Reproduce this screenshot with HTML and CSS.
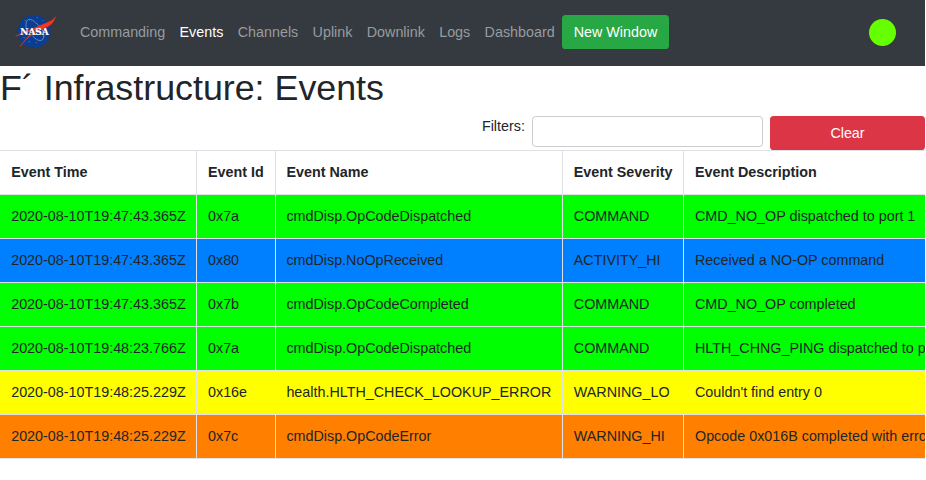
FILE: index.html
```html
<!DOCTYPE html>
<html lang="en">
<head>
<meta charset="utf-8">
<title>F´ Infrastructure: Events</title>
<link rel="stylesheet" href="styles.css">
</head>
<body>
<nav class="navbar">
  <svg class="logo" viewBox="0.4 -0.7 42 36" aria-label="NASA">
    <circle cx="18.5" cy="16.8" r="16.4" fill="#0b3d91"/>
    <g fill="none" stroke="#8ba5d3" stroke-width=".7">
      <path d="M10.5 13C9.5 3 15 3 20 8C27 13 30 20 27 25C24 27 20 25 17 21"/>
      <path d="M9 6h1M21 3h1M27 6h1M8 23h1M13 27h1M20 28h1M28 22h1" stroke-dasharray="1 1"/>
    </g>
    <path d="M0 21.5C12 15.500 22 12 30 8.500C35 6.500 38 5 40 2C38 8 35 11 28 14C19 17 11 23 4.500 32C11 22 17 17 25 13.500C16 16 8 18.500 0 21.500Z" fill="#f5351f" stroke="#f5351f" stroke-width=".4"/>
    <text x="4.6" y="20.2" textLength="28.6" lengthAdjust="spacingAndGlyphs" class="logo-text">NASA</text>
  </svg>
  <div class="links">
    <a>Commanding</a><a class="active">Events</a><a>Channels</a><a>Uplink</a><a>Downlink</a><a>Logs</a><a>Dashboard</a>
  </div>
  <button class="btn new-window">New Window</button>
  <span class="status"></span>
</nav>
<main>
  <h1>F´ Infrastructure: Events</h1>
  <div class="filters">
    <label for="filter">Filters:</label>
    <input id="filter" type="text">
    <button class="btn clear">Clear</button>
  </div>
  <table>
    <colgroup><col class="time"><col class="id"><col class="name"><col class="severity"><col></colgroup>
    <thead><tr><th>Event Time</th><th>Event Id</th><th>Event Name</th><th>Event Severity</th><th>Event Description</th></tr></thead>
    <tbody>
      <tr class="command"><td>2020-08-10T19:47:43.365Z</td><td>0x7a</td><td>cmdDisp.OpCodeDispatched</td><td>COMMAND</td><td>CMD_NO_OP dispatched to port 1</td></tr>
      <tr class="activity"><td>2020-08-10T19:47:43.365Z</td><td>0x80</td><td>cmdDisp.NoOpReceived</td><td>ACTIVITY_HI</td><td>Received a NO-OP command</td></tr>
      <tr class="command"><td>2020-08-10T19:47:43.365Z</td><td>0x7b</td><td>cmdDisp.OpCodeCompleted</td><td>COMMAND</td><td>CMD_NO_OP completed</td></tr>
      <tr class="command"><td>2020-08-10T19:48:23.766Z</td><td>0x7a</td><td>cmdDisp.OpCodeDispatched</td><td>COMMAND</td><td>HLTH_CHNG_PING dispatched to port</td></tr>
      <tr class="warning-lo"><td>2020-08-10T19:48:25.229Z</td><td>0x16e</td><td>health.HLTH_CHECK_LOOKUP_ERROR</td><td>WARNING_LO</td><td>Couldn't find entry 0</td></tr>
      <tr class="warning-hi"><td>2020-08-10T19:48:25.229Z</td><td>0x7c</td><td>cmdDisp.OpCodeError</td><td>WARNING_HI</td><td>Opcode 0x016B completed with error</td></tr>
    </tbody>
  </table>
</main>
</body>
</html>
```
FILE: styles.css
```css
* { box-sizing: border-box; }
html { font-size: 14.33px; }
body {
  margin: 0;
  width: 925px;
  height: 480px;
  overflow: hidden;
  background: #fff;
  color: #212529;
  font-family: "Liberation Sans", Arial, sans-serif;
  line-height: 1.5;
}
.navbar {
  display: flex;
  align-items: center;
  height: 66px;
  padding: 0 29px 2px 16px;
  background: #343a40;
}
.logo { width: 42px; height: 36px; flex: none; overflow: visible; }
.logo-text { font: bold 9.6px "DejaVu Serif", serif; fill: #fff; stroke: #fff; stroke-width: .2px; }
.links { display: flex; gap: 14.33px; margin-left: 22px; padding-top: 2px; color: #999c9f; }
.links .active { color: #fff; }
.btn {
  height: 34px;
  padding: 1px 0 0;
  border: 0;
  border-radius: 3.6px;
  color: #fff;
  font: inherit;
}
.new-window { width: 107px; margin-left: 7.3px; background: #28a745; }
.status {
  width: 27px;
  height: 27px;
  margin-left: auto;
  border-radius: 50%;
  background: #66ff00;
}
h1 { margin: 0; height: 50px; font-size: 35.8px; font-weight: 400; line-height: 44px; }
.filters { display: flex; justify-content: flex-end; height: 34px; }
.filters label { margin-right: 7.1px; line-height: 21px; }
.filters input {
  width: 231px;
  height: 31px;
  margin: 0 7px 0 0;
  border: 1px solid #ccc;
  border-radius: 3.6px;
  background: #fff;
}
.clear { width: 155px; background: #dc3545; }
table {
  width: 925px;
  table-layout: fixed;
  border-spacing: 0;
  border-top: 1px solid #dee2e6;
}
.time { width: 197px; }
.id { width: 79px; }
.name { width: 287px; }
.severity { width: 121px; }
th, td {
  height: 44px;
  padding: 1px 0 0 11.2px;
  border-right: 1px solid #dee2e6;
  border-bottom: 1px solid #dee2e6;
  overflow: hidden;
  text-align: left;
  white-space: nowrap;
}
th:nth-child(2), td:nth-child(2) { padding-left: 11px; }
th:nth-child(3), td:nth-child(3) { padding-left: 10.4px; }
th:nth-child(4), td:nth-child(4) { padding-left: 10.8px; }
th:last-child, td:last-child { padding-left: 11px; border-right: 0; }
.command { background: #0f0; }
.activity { background: #0080ff; }
.warning-lo { background: #ff0; }
.warning-hi { background: #ff8000; }
```
